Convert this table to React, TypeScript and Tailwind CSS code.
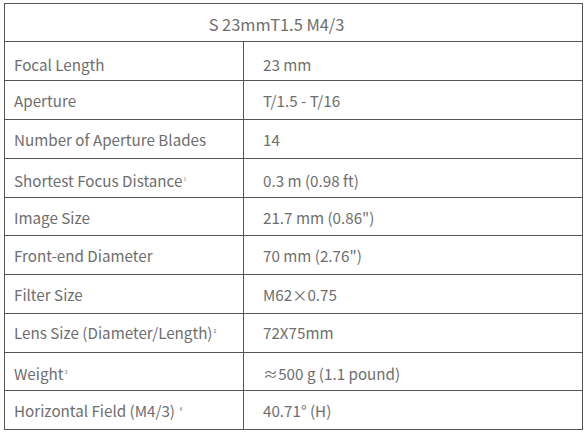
const rows: { label: string; sup?: string; value: string; h: string; pad: string }[] = [
  { label: 'Focal Length', value: '23 mm', h: 'h-[39px]', pad: 'pt-[6px]' },
  { label: 'Aperture', value: 'T/1.5 - T/16', h: 'h-[39px]', pad: 'pt-0' },
  { label: 'Number of Aperture Blades', value: '14', h: 'h-[39px]', pad: 'pt-[1px]' },
  { label: 'Shortest Focus Distance', sup: '1', value: '0.3 m (0.98 ft)', h: 'h-[39px]', pad: 'pt-[4px]' },
  { label: 'Image Size', value: '21.7 mm (0.86")', h: 'h-[38px]', pad: 'pt-[2px]' },
  { label: 'Front-end Diameter', value: '70 mm (2.76")', h: 'h-[39px]', pad: 'pt-0' },
  { label: 'Filter Size', value: 'M62\u00d70.75', h: 'h-[39px]', pad: 'pt-0' },
  { label: 'Lens Size (Diameter/Length)', sup: '2', value: '72X75mm', h: 'h-[39px]', pad: 'pb-[2px]' },
  { label: 'Weight', sup: '3', value: '\u2248500 g (1.1 pound)', h: 'h-[38px]', pad: 'pt-[4px]' },
  { label: 'Horizontal Field (M4/3) ', sup: '4', value: '40.71\u00b0 (H)', h: 'h-[39px]', pad: 'pt-0' },
]

export default function App() {
  return (
    <div
      className="w-[586px] h-[433px] bg-white pl-[4px] pt-[3px] text-[15.2px] text-[#6e6e6e]"
      style={{ fontFamily: '"Noto Sans CJK SC", "Noto Sans", sans-serif' }}
    >
      <div className="w-[579px] border border-[#555]">
        <div className="h-[37px] flex items-center justify-center pr-[34px] pt-[3px] text-[16.4px]">
          S 23mmT1.5 M4/3
        </div>
        {rows.map((r) => (
          <div key={r.label} className={`flex border-t border-[#555] ${r.h}`}>
            <div className={`w-[239px] border-r border-[#555] flex items-center pl-[9px] ${r.pad}`}>
              <span>
                {r.label}
                {r.sup && (
                  <span className="text-[5px] relative -top-[6px] ml-[1px]">{r.sup}</span>
                )}
              </span>
            </div>
            <div className={`flex-1 flex items-center pl-[19px] ${r.pad}`}>{r.value}</div>
          </div>
        ))}
      </div>
    </div>
  )
}
